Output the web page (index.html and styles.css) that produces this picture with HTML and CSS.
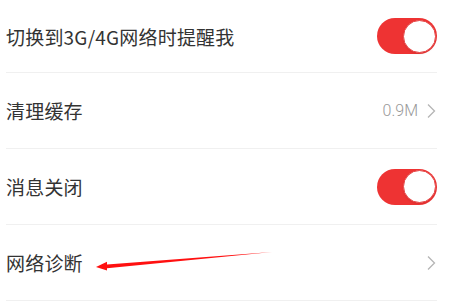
FILE: index.html
```html
<!DOCTYPE html>
<html lang="zh-CN">
<head>
<meta charset="utf-8">
<link rel="stylesheet" href="styles.css">
</head>
<body>
<div class="list">
  <div class="row first">
    <span class="label">切换到3G/4G网络时提醒我</span>
    <span class="switch"><span class="knob"></span></span>
  </div>
  <div class="row">
    <span class="label">清理缓存</span>
    <span class="right"><span class="value">0.9M</span><svg class="chev" width="9" height="16" viewBox="0 0 9 16"><path d="M1 1.5 L7.5 8 L1 14.5" fill="none" stroke="#b5b5b5" stroke-width="1.3"/></svg></span>
  </div>
  <div class="row">
    <span class="label">消息关闭</span>
    <span class="switch"><span class="knob"></span></span>
  </div>
  <div class="row">
    <span class="label">网络诊断</span>
    <span class="right"><svg class="chev" width="9" height="16" viewBox="0 0 9 16"><path d="M1 1.5 L7.5 8 L1 14.5" fill="none" stroke="#b5b5b5" stroke-width="1.3"/></svg></span>
  </div>
</div>
<svg class="arrow" width="449" height="305" viewBox="0 0 449 305">
  <path d="M272 252 L107 264.6 L107 261.8 L96 267 L107 270.6 L107 268.2 Z" fill="#ff1010"/>
</svg>
</body>
</html>
```
FILE: styles.css
```css
html, body {
  margin: 0;
  padding: 0;
  background: #ffffff;
}
body {
  width: 449px;
  height: 305px;
  overflow: hidden;
  position: relative;
  font-family: "Noto Sans CJK SC", "Noto Sans", sans-serif;
  color: #333333;
}
.list {
  display: flex;
  flex-direction: column;
  padding-left: 6px;
  padding-right: 12px;
}
.row {
  height: 76px;
  display: flex;
  align-items: center;
  justify-content: space-between;
  border-bottom: 1px solid #f0f0f0;
  box-sizing: border-box;
}
.row.first {
  height: 73px;
}
.label {
  font-size: 19px;
  line-height: 1;
  letter-spacing: 0.2px;
}
.switch {
  width: 60px;
  height: 36px;
  border-radius: 18px;
  background: #ee3333;
  display: flex;
  align-items: center;
  justify-content: flex-end;
  padding: 0 1px;
  box-sizing: border-box;
}
.knob {
  width: 33px;
  height: 33px;
  border-radius: 50%;
  background: #ffffff;
  border: 1px solid #e64848;
  box-sizing: border-box;
  box-shadow: 0 1px 2px rgba(0,0,0,0.08);
}
.right {
  display: flex;
  align-items: center;
  gap: 9px;
  padding-right: 1px;
}
.value {
  font-size: 16px;
  color: #999999;
  font-family: "Roboto", "Noto Sans", sans-serif;
  font-weight: 300;
}
.chev {
  display: block;
}
.arrow {
  position: absolute;
  left: 0;
  top: 0;
  pointer-events: none;
}
```
